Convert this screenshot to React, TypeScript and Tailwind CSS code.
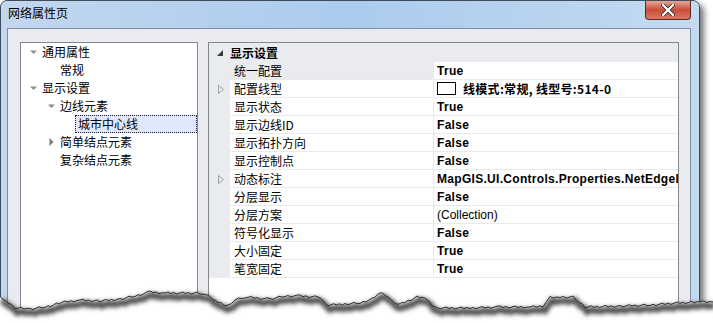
import React from "react";

const cjk = { fontFamily: '"Noto Sans CJK SC", "Noto Sans", sans-serif' };
const val = { fontFamily: '"Liberation Sans", "Noto Sans CJK SC", sans-serif' };

type TreeItem = { text: string; level: number; arrow?: "open" | "closed"; selected?: boolean };

const tree: TreeItem[] = [
  { text: "通用属性", level: 0, arrow: "open" },
  { text: "常规", level: 1 },
  { text: "显示设置", level: 0, arrow: "open" },
  { text: "边线元素", level: 1, arrow: "open" },
  { text: "城市中心线", level: 2, selected: true },
  { text: "简单结点元素", level: 1, arrow: "closed" },
  { text: "复杂结点元素", level: 1 },
];

type Prop = { label: string; value: string; bold?: boolean; expand?: boolean; selected?: boolean; swatch?: boolean };

const props: Prop[] = [
  { label: "统一配置", value: "True", bold: true, selected: true },
  { label: "配置线型", value: "线模式:常规, 线型号:514-0", bold: true, expand: true, swatch: true },
  { label: "显示状态", value: "True", bold: true },
  { label: "显示边线ID", value: "False", bold: true },
  { label: "显示拓扑方向", value: "False", bold: true },
  { label: "显示控制点", value: "False", bold: true },
  { label: "动态标注", value: "MapGIS.UI.Controls.Properties.NetEdgeLabelInfo", bold: true, expand: true },
  { label: "分层显示", value: "False", bold: true },
  { label: "分层方案", value: "(Collection)" },
  { label: "符号化显示", value: "False", bold: true },
  { label: "大小固定", value: "True", bold: true },
  { label: "笔宽固定", value: "True", bold: true },
];

// torn paper edge along the bottom
const edge: [number, number][] = [
  [0, 297], [8, 303], [15, 308], [30, 309], [45, 307], [65, 302], [80, 300], [100, 301],
  [120, 299], [135, 296], [150, 292], [165, 293], [200, 293], [210, 297], [218, 302],
  [228, 306], [235, 300], [245, 297], [270, 299], [285, 296], [300, 296], [318, 297],
  [328, 305], [345, 304], [360, 303], [372, 299], [380, 293], [388, 296], [395, 304],
  [405, 302], [417, 297], [425, 298], [432, 305], [437, 308], [470, 308], [500, 307],
  [530, 307], [543, 306], [550, 297], [560, 297], [573, 297], [580, 303], [585, 307],
  [620, 306], [650, 305], [677, 303], [700, 302], [713, 302],
];

function roughEdge() {
  const out: [number, number][] = [];
  for (let i = 0; i < edge.length - 1; i++) {
    const [x1, y1] = edge[i];
    const [x2, y2] = edge[i + 1];
    const steps = Math.max(1, Math.round((x2 - x1) / 3));
    for (let s = 0; s < steps; s++) {
      const t = s / steps;
      const j = ((i * 7 + s * 13) % 5) - 2;
      out.push([x1 + (x2 - x1) * t, y1 + (y2 - y1) * t + j * 0.5]);
    }
  }
  out.push(edge[edge.length - 1]);
  return out;
}

function TornEdge() {
  const pts = roughEdge();
  const line = pts.map(([x, y]) => `${x.toFixed(1)},${y.toFixed(1)}`).join(" ");
  const shadow = pts.map(([x, y]) => `${(x + 2).toFixed(1)},${(y + 4).toFixed(1)}`).join(" ");
  return (
    <svg className="pointer-events-none absolute inset-0" width={713} height={323}>
      <defs>
        <filter id="blur" x="-5%" y="-50%" width="110%" height="200%">
          <feGaussianBlur stdDeviation="2" />
        </filter>
      </defs>
      <polygon points={`${line} 713,323 0,323`} fill="#ffffff" />
      <polyline points={shadow} fill="none" stroke="#4a4a4a" strokeWidth={6} filter="url(#blur)" />
      <polyline points={line} fill="none" stroke="#2e2e2e" strokeWidth={1} />
    </svg>
  );
}

function OpenArrow() {
  return (
    <svg width="7" height="5" viewBox="0 0 7 5">
      <polygon points="0,0.5 7,0.5 3.5,4" fill="#8c8c8c" />
    </svg>
  );
}

function ClosedArrow() {
  return (
    <svg width="5" height="8" viewBox="0 0 5 8">
      <polygon points="0.5,0 4.5,4 0.5,8" fill="#7c7c7c" />
    </svg>
  );
}

function TreeView() {
  return (
    <div className="w-[178px] shrink-0 border border-[#828790] bg-white" style={cjk}>
      {tree.map((it) => (
        <div key={it.text} className="flex h-[18px] items-center" style={{ paddingLeft: it.level * 18 }}>
          <div className="flex w-[21px] shrink-0 items-center justify-center pl-[4px]">
            {it.arrow === "open" && <OpenArrow />}
            {it.arrow === "closed" && <ClosedArrow />}
          </div>
          {it.selected ? (
            <div className="ml-[-3px] flex h-[18px] flex-1 items-center border border-dotted border-[#1a1a3a] bg-[#dfe8fb] pl-[2px] text-[12px] text-black">
              {it.text}
            </div>
          ) : (
            <span className="text-[12px] leading-none text-black">{it.text}</span>
          )}
        </div>
      ))}
      <div className="h-[160px]" />
    </div>
  );
}

function PropertyGrid() {
  return (
    <div className="min-w-0 flex-1 overflow-hidden border border-[#828790] bg-white">
      <div className="flex h-[19px] items-center bg-[#e9ebef]">
        <div className="flex w-[21px] items-center justify-center">
          <svg width="6" height="6" viewBox="0 0 6 6">
            <polygon points="6,0 6,6 0,6" fill="#3a3a3a" />
          </svg>
        </div>
        <span className="text-[12px] font-bold text-black" style={cjk}>显示设置</span>
      </div>
      {props.map((p) => (
        <div key={p.label} className="flex h-[18px]">
          <div className="flex w-[21px] shrink-0 items-center justify-center bg-[#e9ebef] pl-[2px]">
            {p.expand && (
              <svg width="6" height="9" viewBox="0 0 6 9">
                <polygon points="0.5,0.5 5.5,4.5 0.5,8.5" fill="none" stroke="#a2a2a2" strokeWidth="1" />
              </svg>
            )}
          </div>
          <div
            className={`flex w-[204px] shrink-0 items-center border-b border-r border-[#eaeaea] pl-[4px] text-[12px] text-black ${
              p.selected ? "bg-[#e9ebef]" : "bg-white"
            }`}
            style={cjk}
          >
            {p.label}
          </div>
          <div className="flex min-w-0 flex-1 items-center overflow-hidden whitespace-nowrap border-b border-[#eaeaea] pl-[3px] text-[12px] text-black" style={val}>
            {p.swatch && <div className="mr-[7px] h-[13px] w-[19px] shrink-0 border border-black bg-white" />}
            <span className={p.bold ? "font-bold tracking-[0.3px]" : ""} style={p.swatch ? cjk : val}>
              {p.value}
            </span>
          </div>
        </div>
      ))}
      <div className="h-[60px]" />
    </div>
  );
}

export default function App() {
  return (
    <div className="relative h-[323px] w-[713px] overflow-hidden bg-white">
      <div className="h-[330px] w-[700px] rounded-t-[7px] border border-[#3f4c5c] bg-gradient-to-r from-[#c3d7ee] via-[#abcbee] to-[#c4daf0] shadow-[4px_4px_6px_rgba(0,0,0,0.55)]">
        <div className="flex h-[27px] items-start justify-between pl-[7px]">
          <span className="mt-[6px] text-[12px] leading-none text-black" style={cjk}>网络属性页</span>
          <div className="mr-[8px] flex h-[19px] w-[46px] items-center justify-center rounded-b-[4px] border border-t-0 border-[#5a2a26] bg-gradient-to-b from-[#e8a493] via-[#c84c38] to-[#d77a66]">
            <svg width="14" height="12" viewBox="0 0 14 12">
              <path d="M2 1 L12 11 M12 1 L2 11" stroke="#3a3a3a" strokeWidth="4" strokeLinecap="round" />
              <path d="M2 1 L12 11 M12 1 L2 11" stroke="#ffffff" strokeWidth="2.2" strokeLinecap="round" />
            </svg>
          </div>
        </div>
        <div className="ml-[6px] mr-[8px] flex h-[300px] gap-[10px] border border-[#7f8da0] bg-[#e9ebef] pl-[12px] pr-[11px] pt-[13px]">
          <TreeView />
          <PropertyGrid />
        </div>
      </div>
      <TornEdge />
    </div>
  );
}
